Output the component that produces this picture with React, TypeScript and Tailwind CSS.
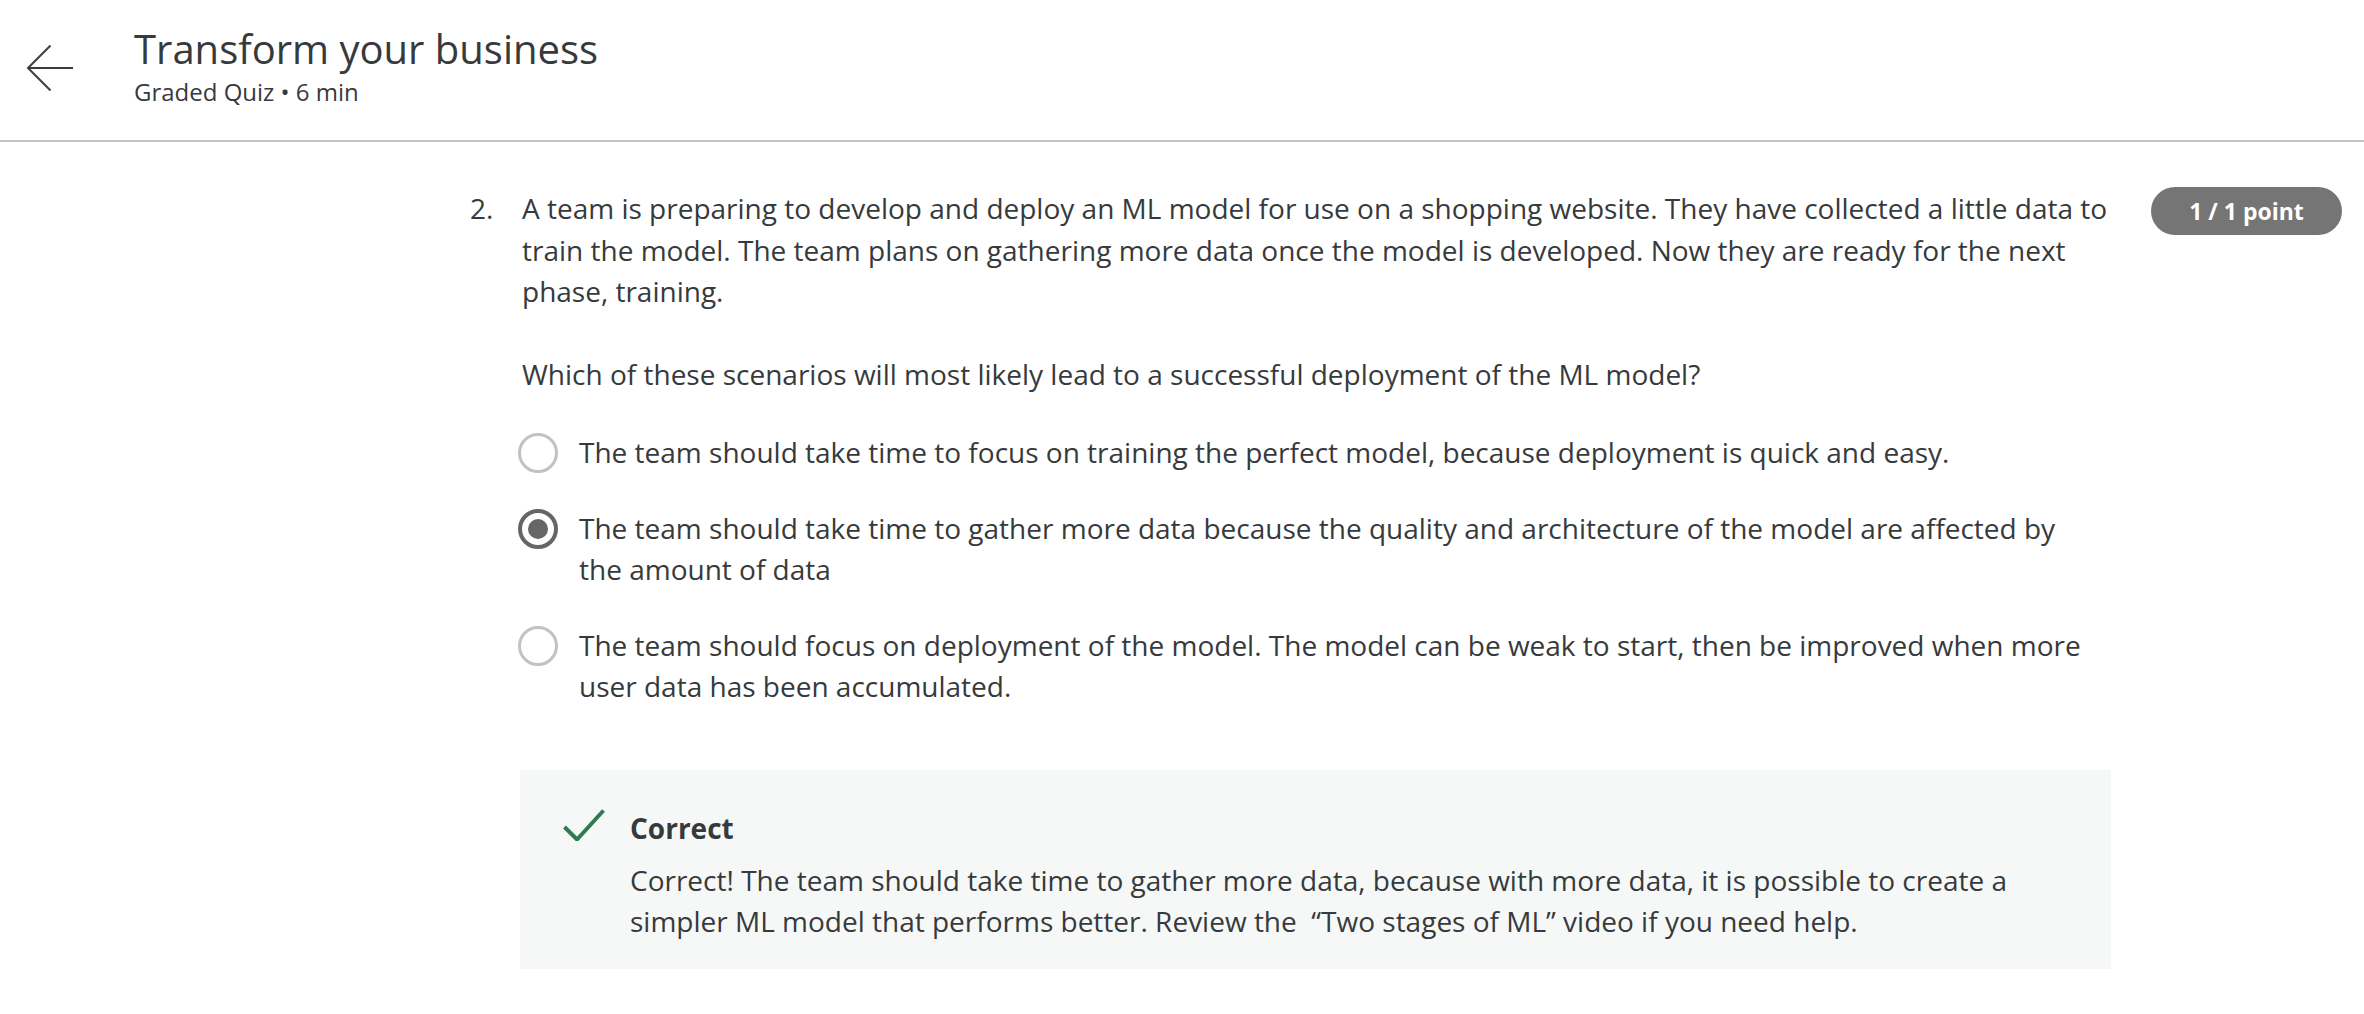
export default function App() {
  const options = [
    {
      text: "The team should take time to focus on training the perfect model, because deployment is quick and easy.",
      checked: false,
    },
    {
      text: "The team should take time to gather more data because the quality and architecture of the model are affected by the amount of data",
      checked: true,
    },
    {
      text: "The team should focus on deployment of the model. The model can be weak to start, then be improved when more user data has been accumulated.",
      checked: false,
    },
  ];

  const feedback =
    "Correct! The team should take time to gather more data, because with more data, it is possible to create a simpler ML model that performs better. Review the \u00a0“Two stages of ML” video if you need help.";

  return (
    <div
      className="min-h-screen bg-white text-[#373a3c]"
      style={{ fontFamily: '"Open Sans", "Liberation Sans", sans-serif' }}
    >
      {/* header */}
      <header className="flex items-start border-b-2 border-[#c4c4c4] h-[142px]">
        <button className="mt-[44px] ml-[26px] w-[48px] h-[48px] flex items-center justify-center">
          <svg width="48" height="48" viewBox="0 0 48 48" fill="none">
            <path
              d="M47 24H2M24.5 1.5L2 24l22.5 22.5"
              stroke="#3c3c3c"
              strokeWidth="2"
            />
          </svg>
        </button>
        <div className="ml-[60px] pt-[22px]">
          <h1 className="text-[40px] leading-[54px] font-normal">
            Transform your business
          </h1>
          <p className="text-[24px] leading-[32px]">Graded Quiz • 6 min</p>
        </div>
      </header>

      {/* question */}
      <main className="pl-[470px] pr-[22px] pt-[46px]">
        <div className="flex items-start">
          <div className="w-[52px] text-[28px] leading-[41.5px]">2.</div>

          <div className="flex-1 text-[28px] leading-[41.5px]">
            <p>
              A team is preparing to develop and deploy an ML model for use on a
              shopping website. They have collected a little data to train the
              model. The team plans on gathering more data once the model is
              developed. Now they are ready for the next phase, training.
            </p>
            <p className="mt-[41px]">
              Which of these scenarios will most likely lead to a successful
              deployment of the ML model?
            </p>

            <div className="mt-[37px] -ml-[4px] pr-[22px] flex flex-col gap-[34px]">
              {options.map((o, i) => (
                <label key={i} className="flex items-start gap-[21px]">
                  {o.checked ? (
                    <span className="shrink-0 mt-[1px] w-[40px] h-[40px] rounded-full border-[4px] border-[#666666] flex items-center justify-center">
                      <span className="w-[20px] h-[20px] rounded-full bg-[#666666]" />
                    </span>
                  ) : (
                    <span className="shrink-0 mt-[1px] w-[40px] h-[40px] rounded-full border-[3px] border-[#c2c2c2]" />
                  )}
                  <span className="leading-[41.5px]">{o.text}</span>
                </label>
              ))}
            </div>

            <div className="mt-[62px] -ml-[2px] bg-[#f6f8f8] flex items-start pl-[43px] pr-[40px] pt-[37px] pb-[26px]">
              <svg
                className="shrink-0 mt-[2px]"
                width="42"
                height="32"
                viewBox="0 0 42 32"
                fill="none"
              >
                <path
                  d="M1.5 18l12.5 12.5L40.5 1.5"
                  stroke="#2f7a52"
                  strokeWidth="4"
                />
              </svg>
              <div className="ml-[25px]">
                <div className="text-[28px] leading-[42px] font-bold">
                  Correct
                </div>
                <p className="mt-[11px] leading-[41.5px]">{feedback}</p>
              </div>
            </div>
          </div>

          <div className="ml-[40px] -mt-[1px] w-[191px] h-[48px] rounded-full bg-[#757575] text-white text-[23px] font-bold flex items-center justify-center">
            1 / 1 point
          </div>
        </div>
      </main>
    </div>
  );
}
